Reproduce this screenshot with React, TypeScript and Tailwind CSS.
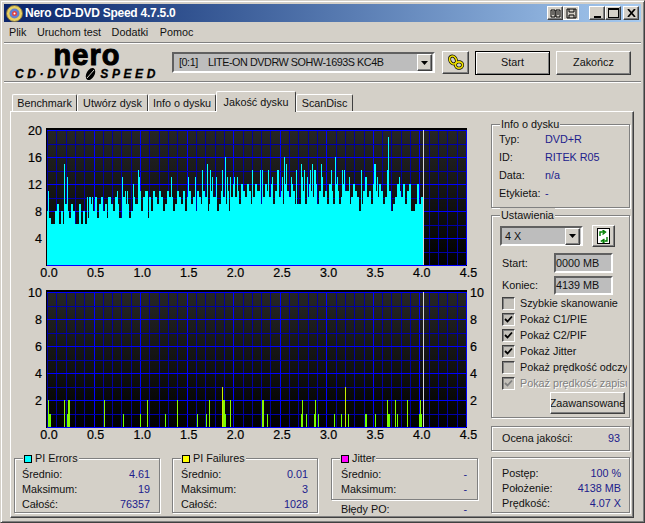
import type { ReactNode } from 'react';

const wobble = [1, 0, 2, -1, 1, 2, 0, 1, -1, 2, 1, 0, 2, 1, -1, 0, 2, 1, 1, -1, 0, 2];

const piSpikes: [number, number][] = [
  [48, 11], [64, 15], [67, 13], [87, 10], [92, 10], [108, 10], [117, 11], [122, 13], [125, 11], [127, 11], [133, 12], [138, 14], [139, 13],
  [147, 11], [160, 11], [167, 11], [171, 13], [188, 13], [195, 13], [202, 14], [207, 15], [210, 14], [212, 13], [216, 13], [222, 14], [225, 16],
  [227, 13], [230, 13], [234, 13], [237, 13], [252, 14], [260, 14], [262, 14], [268, 14], [272, 13], [277, 14], [278, 14], [282, 13], [284, 16],
  [286, 15], [291, 13], [296, 14], [301, 15], [302, 13], [304, 14], [307, 13], [310, 14], [312, 15], [314, 14], [315, 14], [321, 15], [322, 13],
  [331, 14], [335, 16], [337, 13], [342, 14], [344, 14], [349, 13], [361, 14], [365, 13], [366, 13], [374, 15], [375, 15], [377, 13], [387, 14], [388, 19], [399, 13],
];

const piDips: [number, number][] = [
  [51, 6], [59, 6], [77, 6], [81, 6], [121, 7], [147, 7], [339, 9], [359, 8], [391, 8], [412, 8], [419, 9], [298, 9], [321, 9], [333, 9],
];

const pifBars: [number, number, number][] = [
  [48, 1, 2], [49, 2, 1], [64, 1, 2], [67, 1, 1], [68, 2, 2], [104, 1, 2], [123, 1, 1], [140, 1, 1], [147, 1, 2], [165, 1, 1], [177, 1, 2], [197, 1, 1],
  [206, 1, 1], [209, 1, 2], [222, 3, 2], [222, 1, 3], [225, 1, 1], [230, 1, 2], [262, 2, 2], [267, 1, 1], [301, 2, 1], [302, 1, 2], [306, 1, 1], [314, 2, 1],
  [315, 1, 2], [318, 1, 1], [334, 1, 1], [341, 1, 1], [345, 1, 3], [348, 1, 1], [365, 2, 1], [375, 1, 1], [387, 1, 2], [388, 2, 1], [395, 1, 2], [397, 1, 1],
  [407, 1, 2], [420, 1, 2], [419, 3, 1],
];

function piValue(i: number) {
  const x = 47 + i * 2;
  const dip = piDips.find(d => Math.abs(d[0] - x) < 1.5);
  if (dip) return dip[1];
  const floor = x < 88 ? 6.5 : x < 136 ? 8 : x < 233 ? 9 : 9.5;
  return Math.round(floor + wobble[i % wobble.length]);
}

const labelCls = 'fill-black text-[12.5px] [stroke:#000] [stroke-width:0.2px]';

function Chart({ second, children }: { second?: boolean; children: ReactNode }) {
  const left = 36;
  const top = 10;
  const lefts = second ? ['10', '8', '6', '4', '2'] : ['20', '16', '12', '8', '4'];
  return (
    <svg width={480} height={162} className="block">
      <defs>
        <linearGradient id={second ? 'bg2' : 'bg1'} x1="0" y1="0" x2="0" y2="1">
          <stop offset="0" stopColor="#262626" />
          <stop offset="1" stopColor="#000000" />
        </linearGradient>
      </defs>
      <rect x={left - 1} y={top - 2} width={421} height={138} fill="#000" />
      <rect x={left} y={top} width={419} height={135} fill={`url(#${second ? 'bg2' : 'bg1'})`} />
      {Array.from({ length: 46 }, (_, i) => (
        <rect key={i} x={Math.round(left + i * 9.31)} y={top} width={1} height={135} fill={i % 5 === 0 && i > 0 ? '#0000ff' : '#0000a0'} shapeRendering="crispEdges" />
      ))}
      {Array.from({ length: 11 }, (_, i) => (
        <rect key={i} x={left} y={Math.round(top + i * 13.5)} width={419} height={1} fill={i % 2 === 0 ? '#0000ff' : '#0000a8'} shapeRendering="crispEdges" />
      ))}
      <rect x={left + 376} y={top} width={1} height={135} fill="#d8d8d8" shapeRendering="crispEdges" />
      {children}
      {lefts.map((t, i) => (
        <text key={t} x={31} y={top + i * 27 + 1} textAnchor="end" dominantBaseline="central" className={labelCls}>{t}</text>
      ))}
      {second && lefts.map((t, i) => (
        <text key={t} x={459} y={top + i * 27 + 1} dominantBaseline="central" className={labelCls}>{t}</text>
      ))}
      {['0.0', '0.5', '1.0', '1.5', '2.0', '2.5', '3.0', '3.5', '4.0', '4.5'].map((t, i) => (
        <text key={t} x={38 + i * 46.6} y={153} textAnchor="middle" dominantBaseline="central" className={labelCls}>{t}</text>
      ))}
    </svg>
  );
}

function PiBars() {
  const bottom = 145;
  const h = 6.75;
  return (
    <g shapeRendering="crispEdges" fill="#00ffff">
      {Array.from({ length: 188 }, (_, i) => {
        const v = piValue(i);
        return <rect key={i} x={36 + i * 2} y={bottom - Math.round(v * h)} width={2} height={Math.round(v * h)} />;
      })}
      {piSpikes.map(([x, v]) => (
        <rect key={x} x={x - 11} y={bottom - Math.round(v * h)} width={1} height={Math.round(v * h)} />
      ))}
    </g>
  );
}

function PifBars() {
  return (
    <g shapeRendering="crispEdges">
      {pifBars.map(([x, w, v], i) => (
        <rect key={i} x={x - 11} y={145 - v * 13.5} width={w} height={v * 13.5} fill={v === 3 ? '#c8f000' : v === 2 ? '#88f800' : '#70ff00'} />
      ))}
    </g>
  );
}

function Group({ title, swatch, className, children }: { title?: string; swatch?: string; className?: string; children: ReactNode }) {
  return (
    <div className={`relative border border-[#808080] shadow-[1px_1px_0_#fff,inset_1px_1px_0_#fff] ${className ?? ''}`}>
      {title && (
        <div className="absolute -top-[8px] left-[8px] flex h-[15px] items-center gap-[3px] bg-[#d4d0c8] px-[1px]">
          {swatch && <span className={`h-[8px] w-[8px] border border-black ${swatch}`} />}
          <span>{title}</span>
        </div>
      )}
      {children}
    </div>
  );
}

function StatRow({ label, value }: { label: string; value: string }) {
  return (
    <div className="flex h-[15px] items-center justify-between">
      <span>{label}</span>
      <span className="text-[#20208c]">{value}</span>
    </div>
  );
}

function InfoRow({ label, value }: { label: string; value: string }) {
  return (
    <div className="flex h-[18px] items-center">
      <span className="w-[46px] shrink-0">{label}</span>
      <span className="text-[#20208c]">{value}</span>
    </div>
  );
}

function CheckRow({ label, checked, disabled }: { label: string; checked?: boolean; disabled?: boolean }) {
  return (
    <div className="flex h-[16px] items-center gap-[5px] overflow-hidden whitespace-nowrap">
      <span className="flex h-[13px] w-[13px] shrink-0 items-center justify-center border border-t-[#404040] border-l-[#404040] border-r-white border-b-white bg-[#c4c1ba] shadow-[inset_1px_1px_0_#808080]">
        {checked && (
          <svg width="9" height="9" viewBox="0 0 9 9">
            <path d="M1 4 L3.5 6.5 L8 1.5" fill="none" stroke={disabled ? '#808080' : '#000'} strokeWidth="1.8" />
          </svg>
        )}
      </span>
      <span className={disabled ? 'text-[#808080] [text-shadow:1px_1px_0_#fff]' : ''}>{label}</span>
    </div>
  );
}

function Arrow() {
  return (
    <span className="flex h-[17px] w-[15px] shrink-0 items-center justify-center border border-t-white border-l-white border-r-[#404040] border-b-[#404040] bg-[#d4d0c8] shadow-[inset_-1px_-1px_0_#808080]">
      <svg width="7" height="4" viewBox="0 0 7 4"><path d="M0 0 H7 L3.5 4 Z" fill="#000" /></svg>
    </span>
  );
}

function TitleBtn({ children, className }: { children: ReactNode; className?: string }) {
  return (
    <span className={`flex h-[14px] w-[16px] items-center justify-center border border-t-white border-l-white border-r-[#404040] border-b-[#404040] bg-[#d4d0c8] shadow-[inset_-1px_-1px_0_#808080] ${className ?? ''}`}>
      {children}
    </span>
  );
}

const raised = 'border border-t-white border-l-white border-r-[#404040] border-b-[#404040] shadow-[inset_-1px_-1px_0_#808080]';
const sunken = 'border-2 border-t-[#606060] border-l-[#606060] border-r-white border-b-white bg-[#bdbdbd]';

const tabs = [
  { label: 'Benchmark', w: 'w-[65px]' },
  { label: 'Utwórz dysk', w: 'w-[71px]' },
  { label: 'Info o dysku', w: 'w-[68px]' },
  { label: 'Jakość dysku', w: 'w-[80px]', active: true },
  { label: 'ScanDisc', w: 'w-[57px]' },
];

export default function App() {
  return (
    <div className="h-[523px] w-[645px] overflow-hidden border border-[#d4d0c8] border-r-[#404040] border-b-[#404040] bg-[#d4d0c8] p-[3px] font-['Liberation_Sans',sans-serif] text-[10.8px] leading-none text-[#111] shadow-[inset_1px_1px_0_#fff,inset_-1px_-1px_0_#808080]">
      {/* title bar */}
      <div className="flex h-[18px] items-center bg-gradient-to-r from-[#0a246a] to-[#a6caf0] pl-[2px] pr-[2px]">
        <svg width="17" height="17" viewBox="0 0 17 17" className="shrink-0">
          <circle cx="8.5" cy="8.5" r="8" fill="#e8d060" stroke="#807040" />
          <circle cx="8.5" cy="8.5" r="5" fill="#6080d0" />
          <circle cx="8.5" cy="8.5" r="2.5" fill="#e04040" />
          <circle cx="8.5" cy="8.5" r="1" fill="#fff" />
        </svg>
        <span className="ml-[2px] text-[12px] font-bold tracking-[-0.25px] text-white">Nero CD-DVD Speed 4.7.5.0</span>
        <div className="ml-auto flex items-center">
          <TitleBtn>
            <svg width="11" height="9" viewBox="0 0 11 9"><path d="M1 1 H5 V8 H1 Z M6 1 H10 V8 H6 Z M2 3 H4 M2 5 H4 M7 3 H9 M7 5 H9" fill="none" stroke="#000" /></svg>
          </TitleBtn>
          <TitleBtn className="border-t-[#404040] border-l-[#404040] border-r-white border-b-white shadow-none">
            <svg width="11" height="11" viewBox="0 0 11 11"><path d="M1 1 H10 V10 H1 Z M3 1 V4 H8 V1 M3 10 V7 H8 V10" fill="none" stroke="#000" /></svg>
          </TitleBtn>
          <TitleBtn className="ml-[10px]">
            <span className="mt-[7px] h-[2px] w-[7px] bg-black" />
          </TitleBtn>
          <TitleBtn>
            <span className="h-[10px] w-[11px] border border-t-2 border-black" />
          </TitleBtn>
          <TitleBtn className="ml-[2px]">
            <svg width="9" height="8" viewBox="0 0 9 8"><path d="M1 0 L8 8 M8 0 L1 8" stroke="#000" strokeWidth="1.7" /></svg>
          </TitleBtn>
        </div>
      </div>

      {/* menu */}
      <div className="flex h-[20px] items-center gap-[10.5px] pl-[5px]">
        <span>Plik</span>
        <span>Uruchom test</span>
        <span>Dodatki</span>
        <span className="ml-[1px]">Pomoc</span>
      </div>
      <div className="h-[2px] border-t border-b border-t-[#808080] border-b-white" />

      {/* toolbar */}
      <div className="flex h-[37px] items-center">
        <div className="ml-[10px] flex h-[36px] w-[146px] shrink-0 flex-col items-center">
          <span className="mt-[2px] h-[18px] text-[29px] font-bold leading-[16px] tracking-[1px] text-black [-webkit-text-stroke:1px_black]">nero</span>
          <div className="mt-[3px] flex items-center whitespace-nowrap text-[12px] font-bold italic tracking-[3.6px] text-black [-webkit-text-stroke:0.3px_black]">
            <span>CD·DVD</span>
            <svg width="15" height="12" viewBox="0 0 15 12" className="mr-[2px] shrink-0">
              <ellipse cx="7.5" cy="6" rx="4" ry="6.5" transform="rotate(30 7.5 6)" fill="#000" />
              <path d="M4 10 L11 2" stroke="#d4d0c8" strokeWidth="1" />
            </svg>
            <span>SPEED</span>
          </div>
        </div>
        <div className={`ml-[12px] flex h-[21px] w-[263px] items-center justify-between pl-[5px] pr-[1px] ${sunken}`}>
          <span className="whitespace-pre tracking-[-0.45px]">[0:1]    LITE-ON DVDRW SOHW-1693S KC4B</span>
          <Arrow />
        </div>
        <button className={`ml-[7px] flex h-[23px] w-[27px] items-center justify-center ${raised}`}>
          <svg width="18" height="17" viewBox="0 0 18 17">
            <ellipse cx="6" cy="6" rx="3.2" ry="4.2" transform="rotate(-30 6 6)" fill="none" stroke="#000" strokeWidth="3" />
            <ellipse cx="12" cy="11" rx="3.6" ry="3.2" fill="none" stroke="#000" strokeWidth="3" />
            <ellipse cx="6" cy="6" rx="3.2" ry="4.2" transform="rotate(-30 6 6)" fill="none" stroke="#f0e000" strokeWidth="1.7" />
            <ellipse cx="12" cy="11" rx="3.6" ry="3.2" fill="none" stroke="#f0e000" strokeWidth="1.7" />
          </svg>
        </button>
        <button className="ml-[6px] h-[24px] w-[75px] border border-black shadow-[inset_1px_1px_0_#fff,inset_-1px_-1px_0_#808080]">Start</button>
        <button className={`ml-[6px] h-[24px] w-[75px] ${raised}`}>Zakończ</button>
      </div>
      <div className="h-[2px] border-t border-b border-t-[#808080] border-b-white" />

      {/* tabs */}
      <div className="ml-[8px] flex h-[28px] items-end">
        {tabs.map(t => (
          <div
            key={t.label}
            className={`${t.w} flex items-center justify-center rounded-t-[2px] border border-b-0 border-t-white border-l-white border-r-[#404040] bg-[#d4d0c8] ${t.active ? 'relative z-10 -mb-[1px] h-[21px]' : 'h-[17px]'}`}
          >
            {t.label}
          </div>
        ))}
      </div>

      {/* tab panel */}
      <div className="ml-[6px] flex h-[407px] w-[624px] border border-t-white border-l-white border-r-[#404040] border-b-[#404040] shadow-[inset_-1px_-1px_0_#808080]">
        <div className="w-[480px] shrink-0 pt-[8px]">
          <Chart><PiBars /></Chart>
          <Chart second><PifBars /></Chart>
          <div className="ml-[3px] mt-[14px] flex items-start">
            <Group title="PI Errors" swatch="bg-[#00ffff]" className="h-[55px] w-[146px] pl-[7px] pr-[9px] pt-[8px]">
              <StatRow label="Średnio:" value="4.61" />
              <StatRow label="Maksimum:" value="19" />
              <StatRow label="Całość:" value="76357" />
            </Group>
            <Group title="PI Failures" swatch="bg-[#ffff00]" className="ml-[12px] h-[55px] w-[146px] pl-[8px] pr-[9px] pt-[8px]">
              <StatRow label="Średnio:" value="0.01" />
              <StatRow label="Maksimum:" value="3" />
              <StatRow label="Całość:" value="1028" />
            </Group>
            <div className="ml-[13px] w-[147px]">
              <Group title="Jitter" swatch="bg-[#ff00ff]" className="h-[42px] pl-[9px] pr-[10px] pt-[8px]">
                <StatRow label="Średnio:" value="-" />
                <StatRow label="Maksimum:" value="-" />
              </Group>
              <div className="mt-[1px] pl-[10px] pr-[11px] pt-[1px]">
                <StatRow label="Błędy PO:" value="-" />
              </div>
            </div>
          </div>
        </div>

        <div className="w-[139px] shrink-0 pt-[12px]">
          <Group title="Info o dysku" className="h-[84px] pl-[7px] pt-[5px]">
            <InfoRow label="Typ:" value="DVD+R" />
            <InfoRow label="ID:" value="RITEK R05" />
            <InfoRow label="Data:" value="n/a" />
            <InfoRow label="Etykieta:" value="-" />
          </Group>

          <Group title="Ustawienia" className="mt-[7px] h-[203px] pl-[8px] pt-[9px]">
            <div className="flex items-center">
              <div className={`flex h-[20px] w-[83px] items-center justify-between pl-[3px] pr-[1px] ${sunken}`}>
                <span>4 X</span>
                <Arrow />
              </div>
              <button className={`ml-[9px] flex h-[22px] w-[23px] items-center justify-center ${raised}`}>
                <span className="flex h-[16px] w-[13px] items-center justify-center border border-black bg-white">
                  <svg width="9" height="13" viewBox="0 0 9 13">
                    <path d="M1 6 V2 H5 M3.5 0 L6.5 2 L3.5 4.5 M8 7 V11 H4 M5.5 9 L2.5 11 L5.5 13" fill="none" stroke="#008000" strokeWidth="1.4" />
                  </svg>
                </span>
              </button>
            </div>
            <div className="ml-[2px] mt-[6px] flex items-center">
              <span className="w-[52px]">Start:</span>
              <span className={`flex h-[20px] w-[59px] items-center ${sunken}`}>0000 MB</span>
            </div>
            <div className="ml-[2px] mt-[3px] flex items-center">
              <span className="w-[52px]">Koniec:</span>
              <span className={`flex h-[19px] w-[59px] items-center ${sunken}`}>4139 MB</span>
            </div>
            <div className="ml-[2px] mr-[2px]">
              <CheckRow label="Szybkie skanowanie" />
              <CheckRow label="Pokaż C1/PIE" checked />
              <CheckRow label="Pokaż C2/PIF" checked />
              <CheckRow label="Pokaż Jitter" checked />
              <CheckRow label="Pokaż prędkość odczytu" />
              <CheckRow label="Pokaż prędkość zapisu" checked disabled />
            </div>
            <button className={`ml-[50px] mt-[1px] flex h-[22px] w-[75px] items-center justify-center overflow-hidden whitespace-nowrap ${raised}`}>
              Zaawansowane
            </button>
          </Group>

          <Group className="mt-[8px] flex h-[25px] items-center justify-between pl-[10px] pr-[9px]">
            <span>Ocena jakości:</span>
            <span className="text-[#20208c]">93</span>
          </Group>

          <Group className="mt-[6px] h-[56px] pl-[10px] pr-[8px] pt-[8px]">
            <StatRow label="Postęp:" value="100 %" />
            <StatRow label="Położenie:" value="4138 MB" />
            <StatRow label="Prędkość:" value="4.07 X" />
          </Group>
        </div>
      </div>
    </div>
  );
}
